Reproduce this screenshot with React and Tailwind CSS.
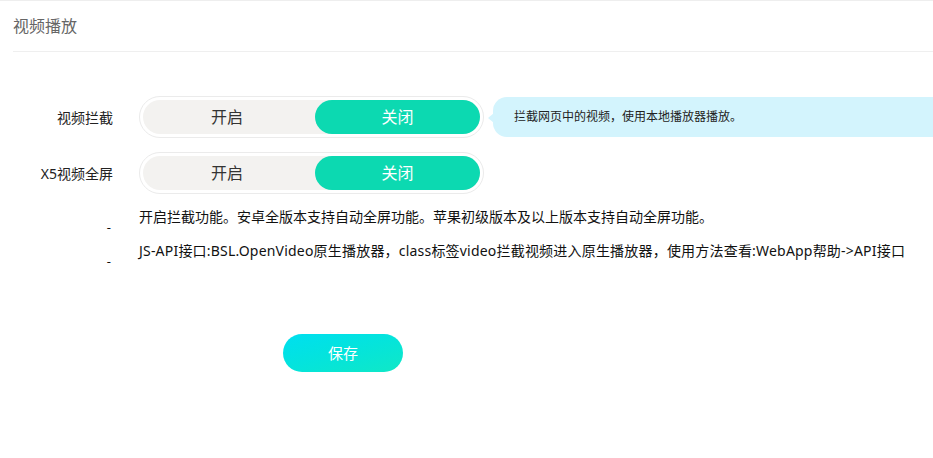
import React, { useState } from 'react';

const font = { fontFamily: '"Microsoft YaHei", "Noto Sans", "Noto Sans CJK SC", sans-serif' };

const Toggle = ({ value, onChange }) => (
  <div className="w-[345px] h-[42px] rounded-full border border-[#ebebeb] p-[3px] bg-white">
    <div className="flex h-full rounded-full bg-[#f3f2f0] text-[16px]">
      <button
        onClick={() => onChange(true)}
        className={`w-[168px] rounded-full ${value ? 'bg-[#0cd9b1] text-white' : 'text-[#333]'}`}
      >
        开启
      </button>
      <button
        onClick={() => onChange(false)}
        className={`flex-1 ml-[4px] rounded-full ${!value ? 'bg-[#0cd9b1] text-white' : 'text-[#333]'}`}
      >
        关闭
      </button>
    </div>
  </div>
);

export default function App() {
  const [intercept, setIntercept] = useState(false);
  const [x5, setX5] = useState(false);

  return (
    <div className="w-[933px] h-[458px] bg-white border-t border-[#eeeeee] overflow-hidden" style={font}>
      {/* Header */}
      <div className="ml-[13px] h-[51px] flex items-center border-b border-[#efefef]">
        <span className="text-[16px] text-[#666]">视频播放</span>
      </div>

      {/* Form */}
      <div className="mt-[44px]">
        <div className="flex items-center h-[42px]">
          <div className="w-[113px] text-right text-[14px] text-[#222]">视频拦截</div>
          <div className="ml-[26px]">
            <Toggle value={intercept} onChange={setIntercept} />
          </div>
          <div className="relative ml-[9px] flex-1 h-[40px] bg-[#d3f4fd] rounded-l-[14px] flex items-center pl-[21px] text-[12px] text-[#222]">
            <span className="absolute left-[-5px] top-[16px] w-0 h-0 border-y-[5px] border-y-transparent border-r-[6px] border-r-[#d3f4fd]" />
            拦截网页中的视频，使用本地播放器播放。
          </div>
        </div>

        <div className="flex items-center h-[42px] mt-[14px]">
          <div className="w-[113px] text-right text-[14px] text-[#222]">X5视频全屏</div>
          <div className="ml-[26px]">
            <Toggle value={x5} onChange={setX5} />
          </div>
        </div>

        <div className="mt-[12px] text-[14px] text-[#111]">
          <div className="flex h-[34px]">
            <div className="w-[113px] flex justify-end pt-[15px] pr-[2px] leading-none text-[13px]">-</div>
            <div className="ml-[26px] whitespace-nowrap">开启拦截功能。安卓全版本支持自动全屏功能。苹果初级版本及以上版本支持自动全屏功能。</div>
          </div>
          <div className="flex h-[34px]">
            <div className="w-[113px] flex justify-end pt-[15px] pr-[2px] leading-none text-[13px]">-</div>
            <div className="ml-[26px] whitespace-nowrap tracking-[0.2px]">JS-API接口:BSL.OpenVideo原生播放器，class标签video拦截视频进入原生播放器，使用方法查看:WebApp帮助-&gt;API接口</div>
          </div>
        </div>

        <div className="mt-[60px] ml-[283px]">
          <button className="w-[120px] h-[38px] rounded-full bg-gradient-to-br from-[#00dff0] to-[#10e8c6] text-white text-[15px]">
            保存
          </button>
        </div>
      </div>
    </div>
  );
}
